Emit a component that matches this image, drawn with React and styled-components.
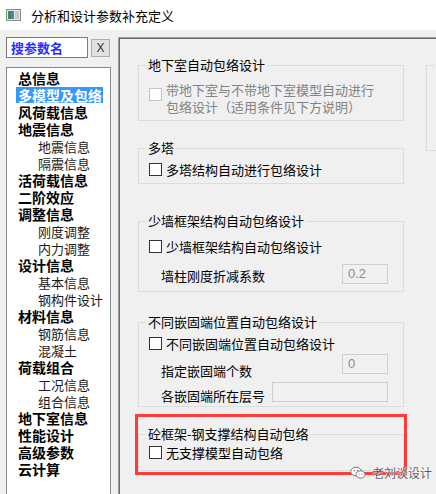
import React from 'react';
import styled, { createGlobalStyle } from 'styled-components';

const GlobalStyle = createGlobalStyle`
  body {
    margin: 0;
    background: #f0f0f0;
  }
`;

const cjk = `"Noto Sans CJK SC", "Liberation Sans", sans-serif`;

const Window = styled.div`
  width: 436px;
  height: 494px;
  overflow: hidden;
  position: relative;
  background: #f0f0f0;
  font-family: ${cjk};
  color: #000;
`;

const TitleBar = styled.div`
  height: 30px;
  background: #fff;
  display: flex;
  align-items: center;
  padding-left: 6px;
  gap: 10px;
  font-size: 13px;
`;

const Body = styled.div`
  display: flex;
  padding-top: 7px;
  height: 457px;
`;

const LeftCol = styled.div`
  width: 105px;
  margin-left: 6px;
  flex-shrink: 0;
  display: flex;
  flex-direction: column;
  gap: 9px;
`;

const SearchRow = styled.div`
  display: flex;
  gap: 3px;
  height: 21px;
`;

const SearchBox = styled.div`
  width: 82px;
  box-sizing: border-box;
  border: 1px solid #7a7a7a;
  background: #fff;
  color: #2b2bff;
  font-size: 13px;
  font-weight: bold;
  line-height: 19px;
  padding-left: 4px;
`;

const ClearButton = styled.div`
  width: 19px;
  height: 18px;
  margin-top: 2px;
  box-sizing: border-box;
  border: 1px solid #adadad;
  background: #e1e1e1;
  font-family: "Liberation Sans", sans-serif;
  font-size: 12px;
  line-height: 16px;
  text-align: center;
  color: #333;
`;

const TreeList = styled.div`
  flex: 1;
  border: 1px solid #828790;
  background: #fff;
  padding-top: 2px;
  min-height: 440px;
`;

const TreeItem = styled.div`
  height: 17px;
  line-height: 17px;
  white-space: nowrap;
  padding-left: ${({ $level }) => ($level === 2 ? 31 : 11)}px;
  font-size: ${({ $level }) => ($level === 2 ? 13 : 14)}px;
  font-weight: ${({ $level }) => ($level === 2 ? 'normal' : 'bold')};
  color: ${({ $level }) => ($level === 2 ? '#1a1a1a' : '#000')};
`;

const Selected = styled.span`
  display: inline-block;
  margin-left: -2px;
  padding: 0 1px 0 2px;
  line-height: 16px;
  background: #3399ff;
  color: #fff;
`;

const Panel = styled.div`
  margin-left: 7px;
  flex: 1;
  display: flex;
  gap: 22px;
  padding: 19px 0 0 19px;
  border-top: 1px solid #a0a0a0;
  border-left: 1px solid #a0a0a0;
  box-shadow: inset 1px 1px 0 #696969;
  min-width: 0;
`;

const MainCol = styled.div`
  width: 266px;
  flex-shrink: 0;
  display: flex;
  flex-direction: column;
`;

const SideCol = styled.div`
  width: 80px;
  flex-shrink: 0;
`;

const Group = styled.fieldset`
  margin: ${({ $mt }) => $mt || 0}px 0 0;
  padding: 0 15px ${({ $pb }) => $pb || 0}px 7px;
  border: 1px solid #dcdcdc;
  min-width: 0;
  height: ${({ $h }) => ($h ? `${$h}px` : 'auto')};
  box-sizing: border-box;
`;

const Legend = styled.legend`
  padding: 0 2px;
  font-size: 13px;
  line-height: 16px;
  color: #000;
`;

const CheckRow = styled.div`
  display: flex;
  align-items: flex-start;
  gap: 4px;
  margin: ${({ $mt }) => $mt || 0}px 0 0 3px;
  font-size: 13px;
  line-height: 17px;
  color: ${({ $disabled }) => ($disabled ? '#838383' : '#000')};
`;

const Box = styled.span`
  width: 13px;
  height: 13px;
  flex-shrink: 0;
  box-sizing: border-box;
  margin-top: ${({ $mt }) => $mt || 2}px;
  background: #fff;
  border: 1px solid ${({ $disabled }) => ($disabled ? '#c4c4c4' : '#333')};
`;

const FieldRow = styled.div`
  display: flex;
  justify-content: space-between;
  align-items: flex-start;
  margin: ${({ $mt }) => $mt || 0}px 0 0 15px;
`;

const FieldLabel = styled.span`
  font-size: 13px;
  line-height: 17px;
  margin-top: ${({ $mt }) => $mt || 0}px;
`;

const ValueBox = styled.div`
  width: ${({ $w }) => $w}px;
  height: 20px;
  box-sizing: border-box;
  border: 1px solid #cfcfcf;
  background: #f0f0f0;
  color: #8d8d8d;
  font-family: "Liberation Sans", sans-serif;
  font-size: 13px;
  line-height: 18px;
  padding-left: 5px;
`;

const Highlight = styled.div`
  margin: 7px 0 0 -3px;
  width: 272px;
  box-sizing: border-box;
  border: 3px solid #ff3c3c;
  padding: 9px 0 1px;
`;

const Watermark = styled.div`
  position: absolute;
  right: 4px;
  bottom: 13px;
  display: flex;
  align-items: center;
  gap: 6px;
  font-size: 12px;
  color: #5c5c5c;
  text-shadow: 0 0 2px #fff, 0 0 1px #fff;
`;

const AppIcon = () => (
  <svg width="15" height="12" viewBox="0 0 15 12">
    <rect x="0.5" y="0.5" width="14" height="11" fill="#e8e8e8" stroke="#8a8a8a" />
    <rect x="2" y="2" width="3" height="8" fill="#3d8a5a" />
    <rect x="5" y="2" width="3" height="8" fill="#4f7fbf" />
    <rect x="9" y="2" width="4" height="8" fill="#c8c8c8" />
  </svg>
);

const WeChatIcon = () => (
  <svg width="16" height="14" viewBox="0 0 16 14">
    <ellipse cx="6" cy="5.5" rx="5.3" ry="4.3" fill="#fff" stroke="#777" strokeWidth="1" />
    <ellipse cx="10.5" cy="8.5" rx="4.6" ry="3.7" fill="#fff" stroke="#777" strokeWidth="1" />
    <circle cx="4.3" cy="4.5" r="0.8" fill="#777" />
    <circle cx="7.6" cy="4.5" r="0.8" fill="#777" />
    <circle cx="9" cy="8" r="0.6" fill="#777" />
    <circle cx="12" cy="8" r="0.6" fill="#777" />
  </svg>
);

const tree = [
  { t: '总信息', l: 1 },
  { t: '多模型及包络', l: 1, sel: true },
  { t: '风荷载信息', l: 1 },
  { t: '地震信息', l: 1 },
  { t: '地震信息', l: 2 },
  { t: '隔震信息', l: 2 },
  { t: '活荷载信息', l: 1 },
  { t: '二阶效应', l: 1 },
  { t: '调整信息', l: 1 },
  { t: '刚度调整', l: 2 },
  { t: '内力调整', l: 2 },
  { t: '设计信息', l: 1 },
  { t: '基本信息', l: 2 },
  { t: '钢构件设计', l: 2 },
  { t: '材料信息', l: 1 },
  { t: '钢筋信息', l: 2 },
  { t: '混凝土', l: 2 },
  { t: '荷载组合', l: 1 },
  { t: '工况信息', l: 2 },
  { t: '组合信息', l: 2 },
  { t: '地下室信息', l: 1 },
  { t: '性能设计', l: 1 },
  { t: '高级参数', l: 1 },
  { t: '云计算', l: 1 },
];

const App = () => (
  <Window>
    <GlobalStyle />
    <TitleBar>
      <AppIcon />
      <span>分析和设计参数补充定义</span>
    </TitleBar>
    <Body>
      <LeftCol>
        <SearchRow>
          <SearchBox>搜参数名</SearchBox>
          <ClearButton>X</ClearButton>
        </SearchRow>
        <TreeList>
          {tree.map((item, i) => (
            <TreeItem key={i} $level={item.l}>
              {item.sel ? <Selected>{item.t}</Selected> : item.t}
            </TreeItem>
          ))}
        </TreeList>
      </LeftCol>

      <Panel>
        <MainCol>
          <Group $pb={5}>
            <Legend>地下室自动包络设计</Legend>
            <CheckRow $mt={8} $disabled>
              <Box $disabled $mt={7} />
              <span>
                带地下室与不带地下室模型自动进行
                <br />
                包络设计（适用条件见下方说明）
              </span>
            </CheckRow>
          </Group>

          <Group $mt={19} $pb={5}>
            <Legend>多塔</Legend>
            <CheckRow $mt={5}>
              <Box />
              <span>多塔结构自动进行包络设计</span>
            </CheckRow>
          </Group>

          <Group $mt={29} $pb={7}>
            <Legend>少墙框架结构自动包络设计</Legend>
            <CheckRow $mt={9}>
              <Box />
              <span>少墙框架结构自动包络设计</span>
            </CheckRow>
            <FieldRow $mt={9}>
              <FieldLabel $mt={3}>墙柱刚度折减系数</FieldLabel>
              <ValueBox $w={46}>0.2</ValueBox>
            </FieldRow>
          </Group>

          <Group $mt={22} $pb={2}>
            <Legend>不同嵌固端位置自动包络设计</Legend>
            <CheckRow $mt={5}>
              <Box />
              <span>不同嵌固端位置自动包络设计</span>
            </CheckRow>
            <FieldRow $mt={2}>
              <FieldLabel $mt={8}>指定嵌固端个数</FieldLabel>
              <ValueBox $w={46}>0</ValueBox>
            </FieldRow>
            <FieldRow $mt={3}>
              <FieldLabel $mt={5}>各嵌固端所在层号</FieldLabel>
              <ValueBox $w={116} />
            </FieldRow>
          </Group>

          <Highlight>
            <Group $pb={9}>
              <Legend>砼框架-钢支撑结构自动包络</Legend>
              <CheckRow $mt={2}>
                <Box />
                <span>无支撑模型自动包络</span>
              </CheckRow>
            </Group>
          </Highlight>
        </MainCol>

        <SideCol>
          <Group $h={94}>
            <Legend>其他</Legend>
          </Group>
        </SideCol>
      </Panel>
    </Body>
    <Watermark>
      <WeChatIcon />
      <span>老刘谈设计</span>
    </Watermark>
  </Window>
);

export default App;
